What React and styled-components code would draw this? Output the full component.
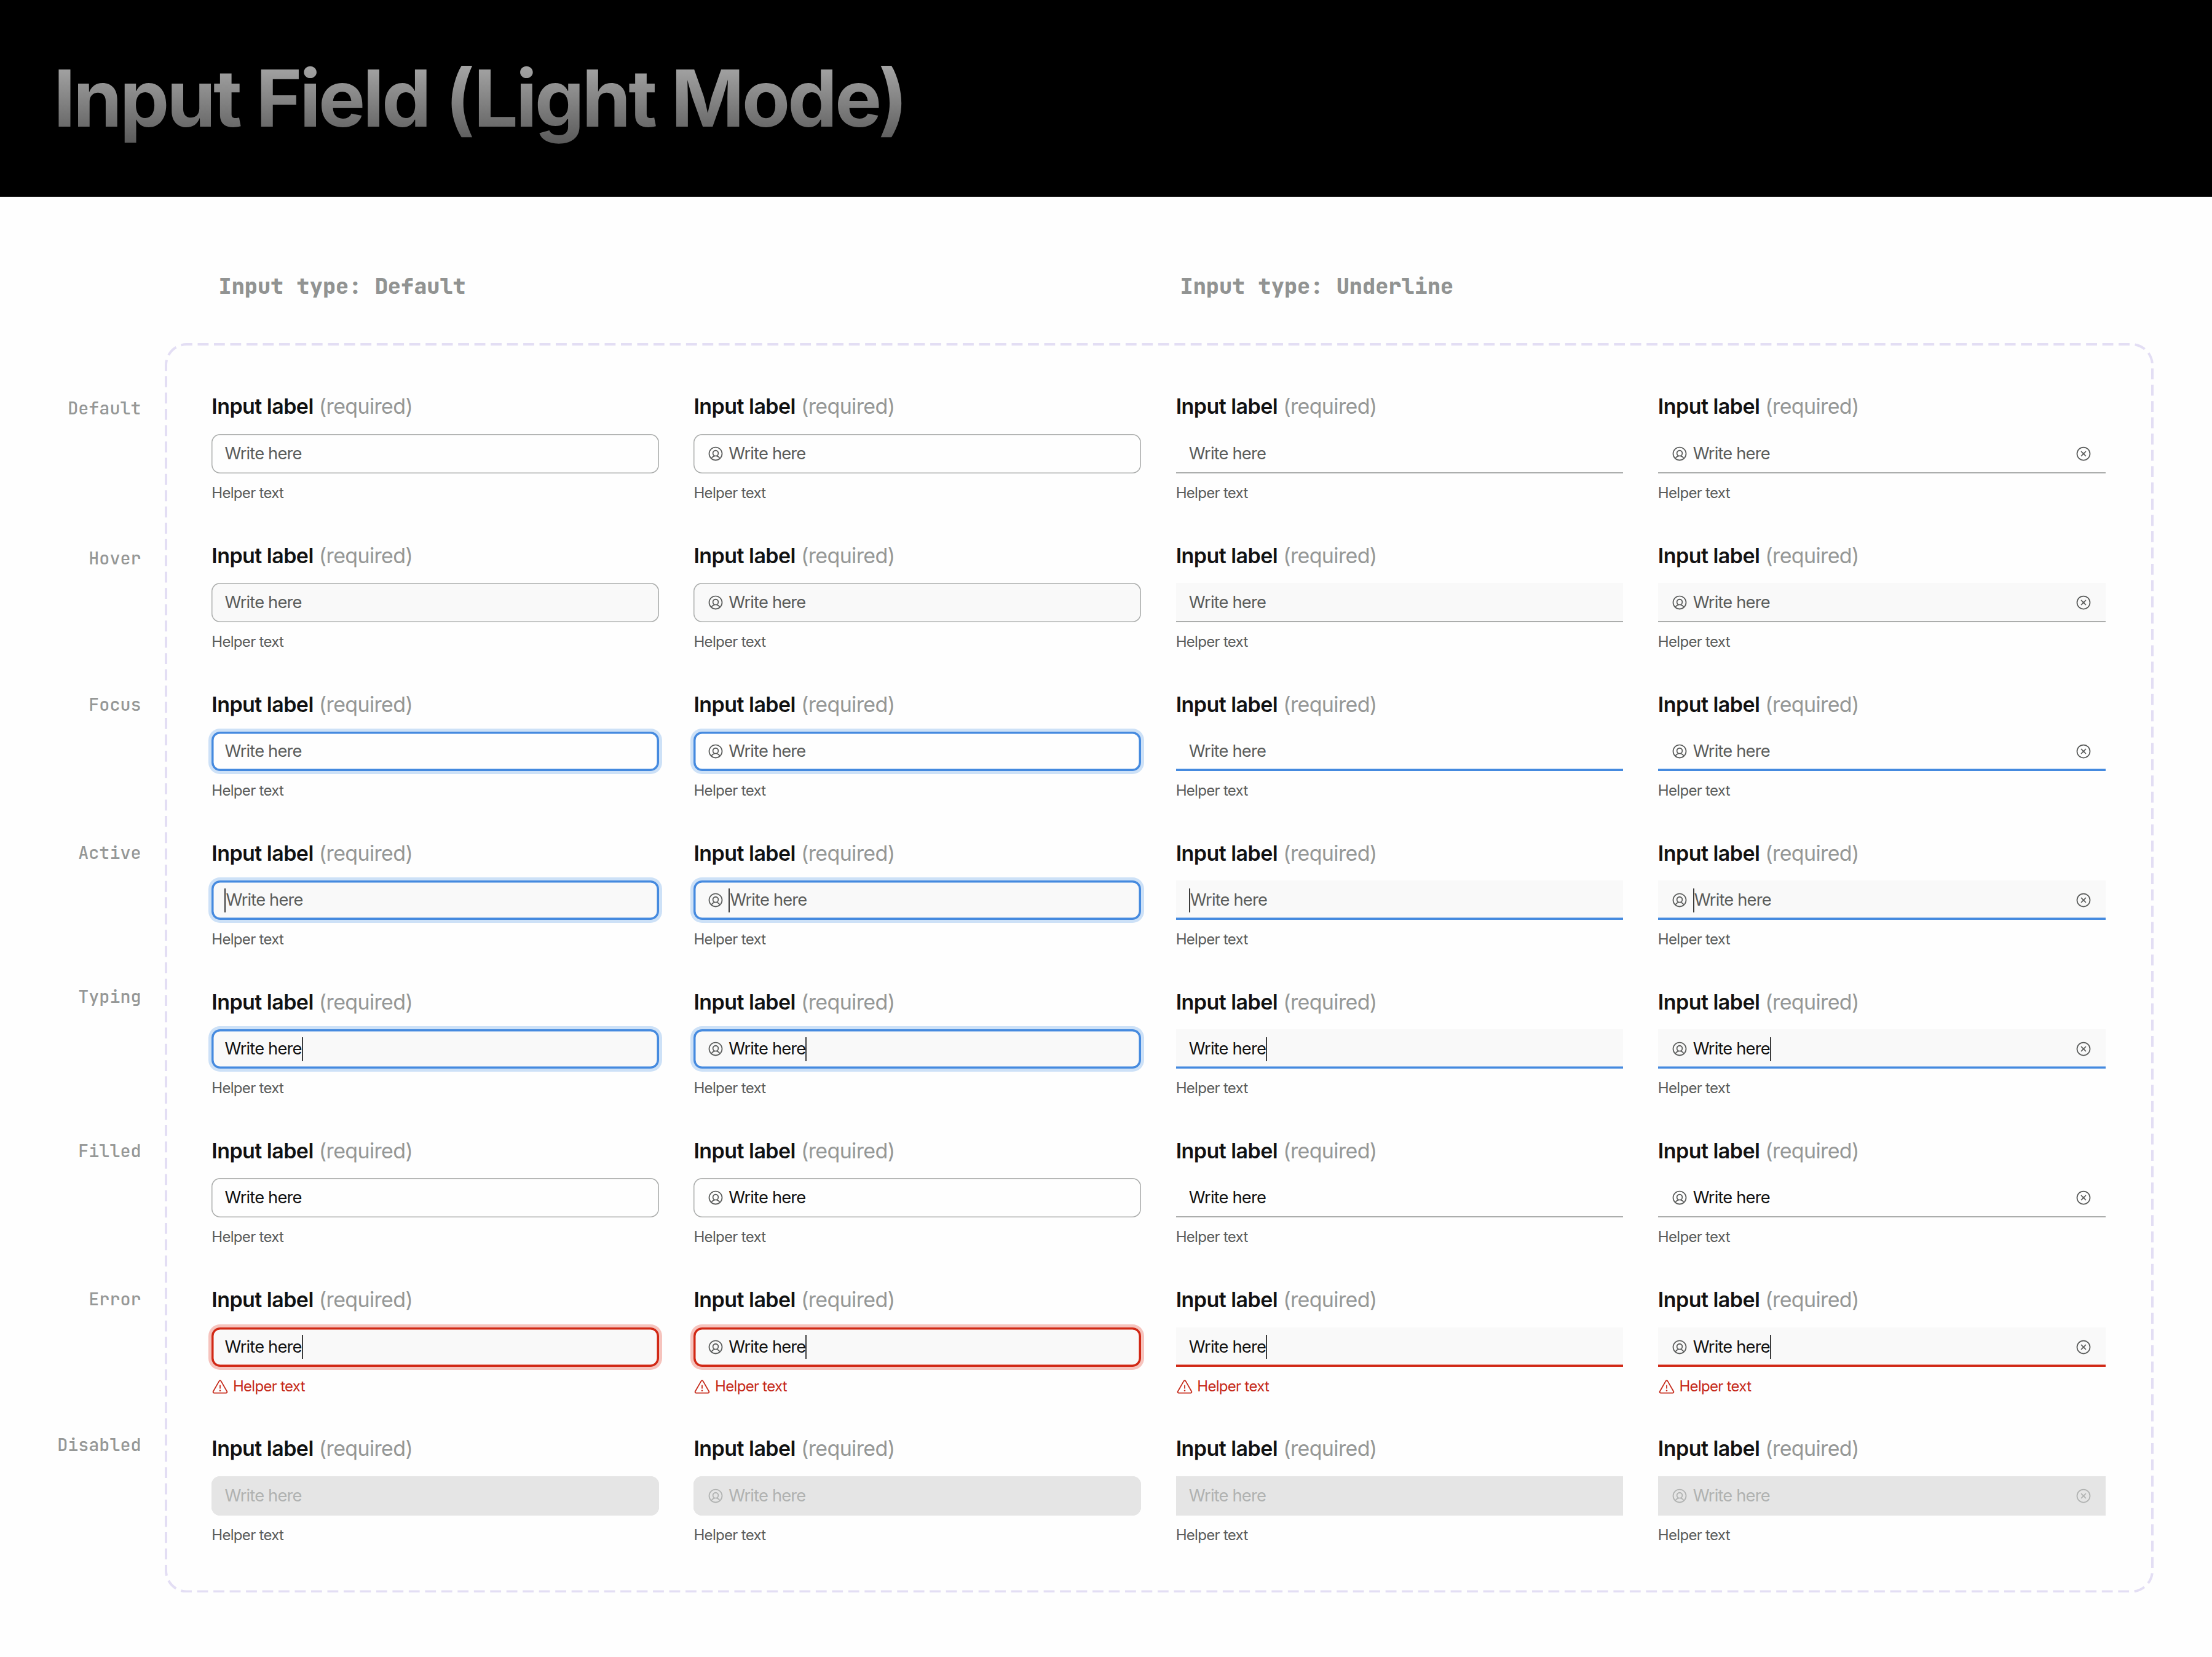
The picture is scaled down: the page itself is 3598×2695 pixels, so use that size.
import styled, { createGlobalStyle, css } from "styled-components";
import { PiUserCircle, PiWarning, PiXCircle } from "react-icons/pi";

const GlobalStyle = createGlobalStyle`
    * {
        box-sizing: border-box;
    }
    body {
        margin: 0;
        background-color: #fefefe;
        font-family: Inter, "Liberation Sans", sans-serif;
    }
`;

/* Whole sheet */
const Sheet = styled.div`
    width: 3598px;
    height: 2695px;
    overflow: hidden;
`;

/* Black bar on top */
const Header = styled.header`
    height: 320px;
    padding: 82px 0 0 87px;
    background-color: #000;
`;

/* Gradient title */
const Title = styled.h1`
    width: fit-content;
    margin: 0;
    padding-right: 10px;
    font-size: 128px;
    font-weight: 700;
    line-height: 155px;
    letter-spacing: -0.0312em;
    white-space: nowrap;
    color: transparent;
    background-image: linear-gradient(#b3b3b3, #585858);
    background-clip: text;
`;

/* Titles of the two input types */
const TypeTitles = styled.div`
    display: grid;
    grid-template-columns: 1564px 1564px;
    padding: 124px 0 0 355.5px;
    height: 237.5px;
`;

const TypeTitle = styled.h2`
    margin: 0;
    font-family: "JetBrains Mono", "DejaVu Sans Mono", monospace;
    font-size: 35.3px;
    font-weight: 800;
    line-height: 44px;
    white-space: nowrap;
    color: #919392;
`;

/* State names on the left, frame on the right */
const Board = styled.main`
    display: flex;
`;

const StateNames = styled.div`
    display: flex;
    flex-direction: column;
    width: 268px;
    padding: 75.8px 38.5px 0 0;
`;

/* Each name is placed by hand, so it takes its own offset */
const StateName = styled.div`
    height: 242px;
    padding-top: ${(properties) => properties.$offset}px;
    font-family: "JetBrains Mono", "DejaVu Sans Mono", monospace;
    font-size: 28.4px;
    font-weight: 500;
    line-height: 38px;
    text-align: right;
    color: #959796;
`;

const Frame = styled.section`
    position: relative;
    width: 3235px;
    height: 2032.5px;
    padding: 82.9px 0 0 76.3px;
`;

/* Dashed outline of the frame */
const Outline = styled.svg`
    position: absolute;
    inset: 0;
    width: 100%;
    height: 100%;
`;

const Fields = styled.div`
    display: grid;
    grid-template-columns: repeat(4, 727.7px);
    grid-auto-rows: 176.3px;
    gap: 65.85px 56.5px;
`;

const Field = styled.div`
    display: flex;
    flex-direction: column;
`;

const Label = styled.div`
    display: flex;
    gap: 9px;
    margin-bottom: 23.3px;
    font-size: 34px;
    font-weight: 600;
    line-height: 42px;
    letter-spacing: -0.016em;
    color: #111;
`;

const Required = styled.span`
    font-weight: 400;
    letter-spacing: -0.019em;
    color: #959796;
`;

const boxed = css`
    border-radius: 14px;
    box-shadow:
        inset 0 0 0 ${(properties) => properties.$look.width}px ${(properties) => properties.$look.border},
        0 0 0 5px ${(properties) => properties.$look.halo || "transparent"};
`;

const underlined = css`
    box-shadow: inset 0 -${(properties) => properties.$look.line}px 0 ${(properties) => properties.$look.border};
`;

/* The input itself */
const Input = styled.div`
    display: flex;
    align-items: center;
    flex-shrink: 0;
    height: 64px;
    padding: 0 22px 0 21.2px;
    background-color: ${(properties) => properties.$look.background};
    color: ${(properties) => properties.$look.icon};
    ${(properties) => (properties.$underline ? underlined : boxed)}
`;

const UserIcon = styled(PiUserCircle)`
    width: 28px;
    height: 28px;
    margin-right: 7.6px;
`;

const ClearIcon = styled(PiXCircle)`
    width: 28px;
    height: 28px;
    margin-left: auto;
`;

const Value = styled.span`
    font-size: 27.3px;
    line-height: 36px;
    letter-spacing: -0.03em;
    color: ${(properties) => properties.$color};
`;

const Caret = styled.span`
    width: 2px;
    height: 39px;
    background-color: #3c3c3c;
`;

const Helper = styled.div`
    display: flex;
    align-items: center;
    gap: 6.6px;
    margin-top: 17px;
    font-size: 24px;
    line-height: 30px;
    letter-spacing: -0.029em;
    color: ${(properties) => (properties.$error ? "#c52818" : "#5a5c5b")};
`;

const WarningIcon = styled(PiWarning)`
    width: 28px;
    height: 28px;
    margin-top: 2px;
`;

const idle = { border: "#abadac", width: 1.5, line: 2, background: "#fefefe", icon: "#5a5c5b", text: "#5a5c5b" };
const focus = { ...idle, border: "#458adf", width: 3.5, line: 3.5, halo: "#cde1f7" };
const typing = { ...focus, background: "#f9f9f9", text: "#111" };

/* States from top to bottom */
const states = [
    { name: "Default", offset: 12, look: idle },
    { name: "Hover", offset: 14.2, look: { ...idle, background: "#f9f9f9" } },
    { name: "Focus", offset: 9.5, look: focus },
    { name: "Active", offset: 8.5, look: { ...focus, background: "#f9f9f9" }, caret: "start" },
    { name: "Typing", offset: 0.8, look: typing, caret: "end" },
    { name: "Filled", offset: 10, look: { ...idle, text: "#111" } },
    { name: "Error", offset: 8.7, look: { ...typing, border: "#d12815", halo: "#f6c3bd" }, caret: "end", error: true },
    {
        name: "Disabled",
        offset: 4,
        look: { ...idle, border: "#e5e5e5", background: "#e5e5e5", icon: "#b0b2b1", text: "#b0b2b1" },
    },
];

/* Columns from left to right */
const variants = [
    { id: "default" },
    { id: "default-icon", icon: true },
    { id: "underline", underline: true },
    { id: "underline-icon", underline: true, icon: true, clear: true },
];

const InputField = ({ state, variant }) => {
    return (
        <Field>
            <Label>
                Input label
                <Required>(required)</Required>
            </Label>
            <Input $look={state.look} $underline={variant.underline}>
                {variant.icon && <UserIcon/>}
                {state.caret === "start" && <Caret/>}
                <Value $color={state.look.text}>Write here</Value>
                {state.caret === "end" && <Caret/>}
                {variant.clear && <ClearIcon/>}
            </Input>
            <Helper $error={state.error}>
                {state.error && <WarningIcon/>}
                Helper text
            </Helper>
        </Field>
    );
};

const App = () => {
    return (
        <Sheet>
            <GlobalStyle/>
            <Header>
                <Title>Input Field (Light Mode)</Title>
            </Header>
            <TypeTitles>
                <TypeTitle>Input type: Default</TypeTitle>
                <TypeTitle>Input type: Underline</TypeTitle>
            </TypeTitles>
            <Board>
                <StateNames>
                    {states.map((state) => (
                        <StateName key={state.name} $offset={state.offset}>{state.name}</StateName>
                    ))}
                </StateNames>
                <Frame>
                    <Outline viewBox="0 0 3235 2032.5" fill="none">
                        <rect
                            x="2" y="2" width="3231" height="2028.5" rx="34"
                            stroke="#e3def4" strokeWidth="4"
                            strokeDasharray="17.8 8.68" strokeDashoffset="-17.5"
                        />
                    </Outline>
                    <Fields>
                        {states.map((state) =>
                            variants.map((variant) => (
                                <InputField key={`${state.name}-${variant.id}`} state={state} variant={variant}/>
                            ))
                        )}
                    </Fields>
                </Frame>
            </Board>
        </Sheet>
    );
};

export default App;
